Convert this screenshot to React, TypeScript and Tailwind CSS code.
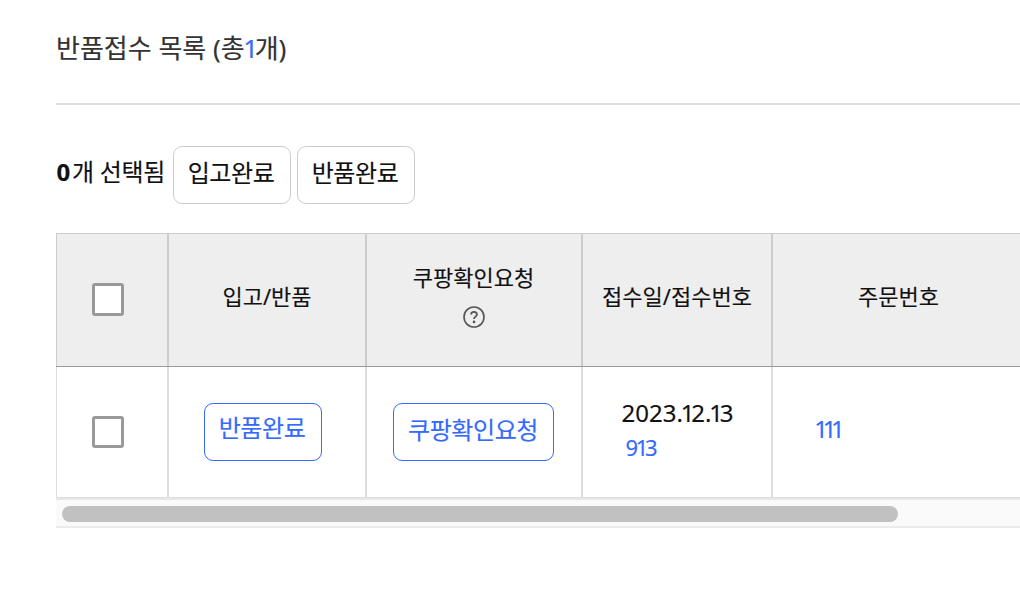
import React from 'react';

const Checkbox = ({ className = 'h-8' }: { className?: string }) => {
  return (
    <span
      role="checkbox"
      aria-checked="false"
      className={`block w-8 rounded-[3px] border-[3px] border-[#999] bg-white ${className}`}
    />
  );
};

const HelpIcon = () => {
  return (
    <svg className="h-6 w-6" viewBox="0 0 24 24" fill="none" stroke="#555" strokeWidth="1.6">
      <circle cx="12" cy="12" r="10" />
      <path d="M9.1 9.6c0-1.7 1.2-2.8 2.9-2.8s2.9 1 2.9 2.6c0 2.1-2.9 2.3-2.9 4.5" strokeWidth="1.8" />
      <circle cx="12" cy="16.9" r="1.3" fill="#555" stroke="none" />
    </svg>
  );
};

// digits with a narrow "1"
const Digits = ({ value }: { value: string }) => {
  return (
    <>
      {value.split('').map((char, i) => (
        <span key={i} className={char === '1' ? '-ml-[2.2px] -mr-[3.2px]' : ''}>
          {char}
        </span>
      ))}
    </>
  );
};

const columns = 'grid grid-cols-[113px_198px_216px_190px_247px]';
const headCell = 'flex flex-col items-center border-r-2 border-[#ccc]';
const bodyCell = 'flex flex-col items-center border-r-2 border-[#ddd]';
const button = 'h-[58px] shrink-0 rounded-[9px] border text-[24px] leading-[36px] tracking-[-0.4px]';

const App = () => {
  return (
    <main className="h-[608px] w-[1020px] overflow-hidden whitespace-nowrap bg-white pl-14 font-['Noto_Sans','Noto_Sans_CJK_KR',sans-serif] text-[#111] [-webkit-text-stroke:0.15px_currentColor]">
      <header className="h-[105px] border-b-2 border-[#ddd] pt-[29px]">
        <h1 className="text-[26px] leading-[38px] text-[#333]">
          반품접수 목록 (총<span className="-ml-[1.5px] -mr-[3.5px] text-[#346aff]">1</span>개)
        </h1>
      </header>

      <div className="flex h-[128px] items-start gap-[6px] pt-[41px]">
        <p className="w-[111px] pt-[8px] text-[24px] leading-[36px] tracking-[-0.3px]">
          <b className="mr-[2px] ml-[0.5px]">0</b>개 선택됨
        </p>
        <button className={`${button} w-[118px] border-[#ccc] pr-[2px] pb-[5px]`}>입고완료</button>
        <button className={`${button} w-[118px] border-[#ccc] pr-[2px] pb-[5px]`}>반품완료</button>
      </div>

      <section className="w-[964px] overflow-hidden">
        <div className={`${columns} h-[134px] border-t border-b border-t-[#ccc] border-b-[#999] bg-[#eee] text-[22px] leading-[32px]`}>
          <div className={`${headCell} border-l pt-[49px] pr-[8px]`}>
            <Checkbox className="h-[33px]" />
          </div>
          <div className={`${headCell} pt-[46px]`}>입고/반품</div>
          <div className={`${headCell} pt-[27px] pr-px`}>
            쿠팡확인요청
            <span className="mt-[12px]"><HelpIcon /></span>
          </div>
          <div className={`${headCell} pt-[46px]`}>접수일/접수번호</div>
          <div className="pt-[46px] pl-[85px]">주문번호</div>
        </div>

        <div className={`${columns} h-[131px] border-b border-[#ddd]`}>
          <div className={`${bodyCell} border-l pt-[49px] pr-[8px]`}>
            <Checkbox />
          </div>
          <div className={`${bodyCell} pt-[36px] pr-[8px]`}>
            <button className={`${button} w-[118px] border-[#346aff] pr-[2px] pb-[9px] text-[#346aff]`}>반품완료</button>
          </div>
          <div className={`${bodyCell} pt-[36px] pr-[1px]`}>
            <button className={`${button} w-[161px] border-[#346aff] pr-px pb-[5px] text-[#346aff]`}>쿠팡확인요청</button>
          </div>
          <div className="border-r-2 border-[#ddd] pt-[28px] pl-[38.5px]">
            <p className="text-[24px] leading-[36px]">
              <Digits value="2023.12.13" />
            </p>
            <p className="pl-1 text-[22px] leading-[32px] tracking-[-0.2px] text-[#346aff]">
              <Digits value="913" />
            </p>
          </div>
          <div className="pt-[44px] pl-[43.5px] text-[24px] leading-[36px] text-[#346aff]">
            <Digits value="111" />
          </div>
        </div>

        {/* horizontal scroll track */}
        <div className="h-[30px] border-t-2 border-b-2 border-t-[#e8e8e8] border-b-[#ebebeb] bg-[#fafafa] pt-[6px] pl-[6px]">
          <div className="h-4 w-[836px] rounded-full bg-[#c1c1c1]" />
        </div>
      </section>
    </main>
  );
};

export default App;
